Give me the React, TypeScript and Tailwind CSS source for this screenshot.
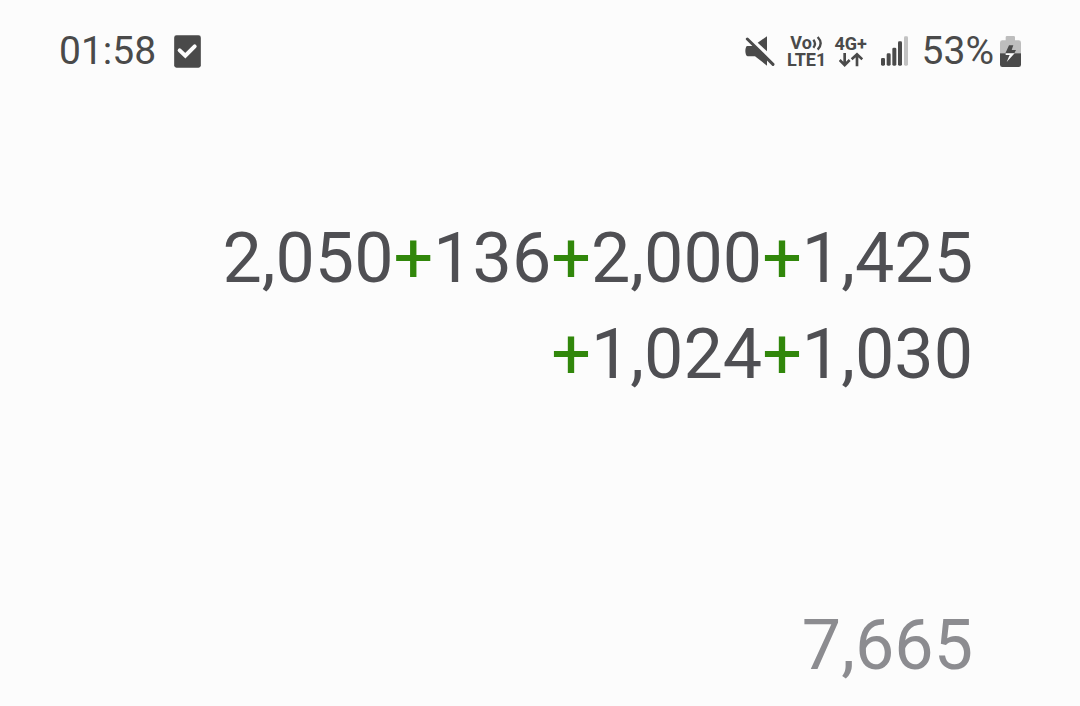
import React from 'react';

function TaskIcon() {
  return (
    <svg viewBox="0 0 81 99" className="h-[33px] w-[27px]" role="img" aria-label="Task done">
      <rect x="0.5" y="1" width="80" height="97" rx="7" fill="#4a4a4a" />
      <path d="M17 46 L34 62 L62 34" fill="none" stroke="#fcfcfc" strokeWidth="12" strokeLinecap="round" />
    </svg>
  );
}

function MuteIcon() {
  return (
    <svg viewBox="0 0 90 93" className="h-[31px] w-[30px]" role="img" aria-label="Sound off">
      <path d="M7 30 H26 L66 70 V89 L30 61 H9 Q5 61 3 56 Q-1 45 3 34 Q4 30 7 30 Z" fill="#4a4a4a" />
      <path d="M66 1 V46 L38 20 Z" fill="#4a4a4a" />
      <path d="M7 9 L84 85" stroke="#4a4a4a" strokeWidth="9" strokeLinecap="round" />
    </svg>
  );
}

function Waves() {
  return (
    <svg viewBox="0 0 33 48" className="h-4 w-[11px]" aria-hidden="true">
      <path d="M4 14 Q14 26 4 38" fill="none" stroke="#4a4a4a" strokeWidth="7" />
      <path d="M17 6 Q35 25 17 44" fill="none" stroke="#4a4a4a" strokeWidth="7" />
    </svg>
  );
}

function DataArrows() {
  return (
    <svg viewBox="0 0 72 48" className="h-4 w-6" role="img" aria-label="Data transfer">
      <g fill="none" stroke="#4a4a4a" strokeWidth="8">
        <path d="M17 3 V38 M2 24 L17 39 L32 24" />
        <path d="M54 43 V8 M38 22 L54 7 L70 22" />
      </g>
    </svg>
  );
}

function SignalIcon() {
  return (
    <svg viewBox="0 0 81 90" className="h-[30px] w-[27px]" role="img" aria-label="Signal strength">
      <g fill="#4a4a4a">
        <rect x="0" y="66" width="12" height="23" rx="4" />
        <rect x="17" y="52" width="12" height="37" rx="4" />
        <rect x="34" y="35" width="12" height="54" rx="4" />
        <rect x="51" y="16" width="12" height="73" rx="4" />
      </g>
      <rect x="69" y="1" width="12" height="88" rx="4" fill="#c2c2c2" />
    </svg>
  );
}

function BatteryIcon() {
  return (
    <svg viewBox="0 0 63 93" className="h-[31px] w-[21px]" role="img" aria-label="Charging">
      <path d="M7 13 H17 V4 Q17 0 21 0 H41 Q45 0 45 4 V13 H56 Q63 13 63 20 V52 H0 V20 Q0 13 7 13 Z" fill="#bdbdbd" />
      <path d="M0 52 H63 V86 Q63 93 56 93 H7 Q0 93 0 86 Z" fill="#4a4a4a" />
      <path d="M27 28 H40 L35 42 H48 L43 52 H16 Z" fill="#4a4a4a" />
      <path d="M27 52 H44 L20 78 L29 57 H17 V52 Z" fill="#fcfcfc" />
    </svg>
  );
}

function StatusBar() {
  return (
    <header className="flex h-10 items-center justify-between pr-[59px] pl-[59px] text-[39px] leading-10 text-[#4a4a4a]">
      <div className="flex items-center gap-[18px]">
        <time>01:58</time>
        <TaskIcon />
      </div>
      <div className="flex items-center">
        <MuteIcon />
        <div className="ml-3 flex w-10 flex-col items-center text-[18px] leading-[17px] font-bold">
          <div className="flex items-center">
            <span>Vo</span>
            <Waves />
          </div>
          <span>LTE1</span>
        </div>
        <div className="ml-2 flex w-8 flex-col items-center text-[18px] leading-[17px] font-bold">
          <span>4G+</span>
          <DataArrows />
        </div>
        <div className="mr-[14px] ml-[14px]">
          <SignalIcon />
        </div>
        <span className="mr-[6px]">53%</span>
        <BatteryIcon />
      </div>
    </header>
  );
}

const lines = ['2,050+136+2,000+1,425', '+1,024+1,030'];

function ExpressionLine({ text }: { text: string }) {
  return (
    <div>
      {text.split(/(\+)/).map((part, i) =>
        part === '+' ? (
          <span key={i} className="text-[#31870b]">+</span>
        ) : (
          <span key={i}>{part}</span>
        ),
      )}
    </div>
  );
}

export default function App() {
  return (
    <div className="min-h-screen bg-[#fcfcfc] pt-[31px] font-[Roboto,sans-serif]">
      <StatusBar />
      <main className="flex flex-col pt-[139px] pr-[107px] text-right text-[70px] leading-[96px]">
        <section aria-label="Expression" className="text-[#4f4f53]">
          {lines.map((line) => (
            <ExpressionLine key={line} text={line} />
          ))}
        </section>
        <output className="mt-[195px] block text-[#8c8c90]">7,665</output>
      </main>
    </div>
  );
}
